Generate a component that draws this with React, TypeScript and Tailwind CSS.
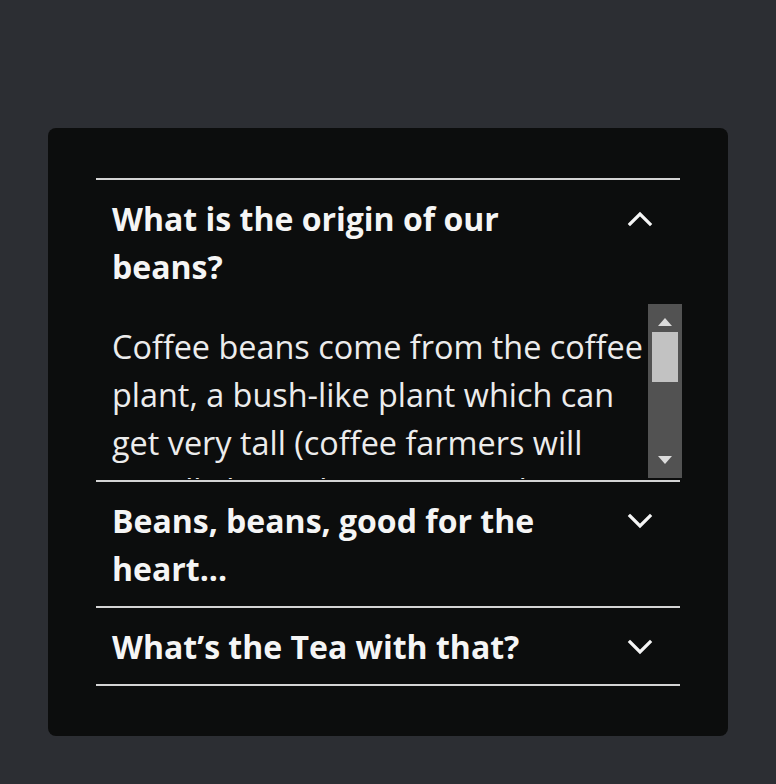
import { useState } from "react";

const items = [
  {
    q: "What is the origin of our beans?",
    a: "Coffee beans come from the coffee plant, a bush-like plant which can get very tall (coffee farmers will usually keep them trimmed to around five feet so they are easier to harvest).",
  },
  {
    q: "Beans, beans, good for the heart...",
    a: "Coffee is packed with antioxidants and has been linked to a lower risk of heart disease when enjoyed in moderation.",
  },
  {
    q: "What\u2019s the Tea with that?",
    a: "We also carry a small selection of loose leaf teas for those who prefer something a little lighter.",
  },
];

function Chevron({ up }: { up: boolean }) {
  return (
    <svg
      width="26"
      height="16"
      viewBox="0 0 26 16"
      className="shrink-0"
      fill="none"
      stroke="#f5f5f5"
      strokeWidth="3.2"
      strokeLinecap="square"
      strokeLinejoin="miter"
    >
      {up ? (
        <polyline points="3,13 13,3 23,13" />
      ) : (
        <polyline points="3,3 13,13 23,3" />
      )}
    </svg>
  );
}

// fake scrollbar drawn over the open panel
function Scrollbar() {
  return (
    <div className="absolute right-[-2px] top-0 flex h-[174px] w-[34px] flex-col items-center justify-between bg-[#525252] py-[14px]">
      <div className="flex flex-col items-center gap-[6px]">
        <div className="h-0 w-0 border-x-[7px] border-b-[8px] border-x-transparent border-b-[#dcdcdc]" />
        <div className="h-[50px] w-[26px] bg-[#c2c2c2]" />
      </div>
      <div className="h-0 w-0 border-x-[7px] border-t-[8px] border-x-transparent border-t-[#dcdcdc]" />
    </div>
  );
}

export default function App() {
  const [open, setOpen] = useState<number | null>(0);

  return (
    <div className="min-h-screen bg-[#2c2e33] px-12 pt-32 font-['Open_Sans',sans-serif]">
      <div className="w-[680px] rounded-lg bg-[#0c0d0d] px-12 py-[50px]">
        <div className="border-t-2 border-[#d4d4d4]">
          {items.map((item, i) => (
            <div key={i} className="border-b-2 border-[#d4d4d4]">
              <button
                onClick={() => setOpen(open === i ? null : i)}
                className="flex w-full items-start gap-4 pb-[13px] pl-4 pr-[27px] pt-[15px] text-left"
              >
                <span className="flex-1 text-[32px] font-bold leading-[48px] text-[#f5f5f5]">
                  {item.q}
                </span>
                <span className="flex h-[48px] items-center">
                  <Chevron up={open === i} />
                </span>
              </button>
              {open === i && (
                <div className="relative h-[176px]">
                  <div className="h-[175px] overflow-hidden">
                    <p className="pl-4 pr-[32px] pt-[18px] text-[32.4px] leading-[48px] text-[#ececec]">
                      {item.a}
                    </p>
                  </div>
                  <Scrollbar />
                </div>
              )}
            </div>
          ))}
        </div>
      </div>
    </div>
  );
}
